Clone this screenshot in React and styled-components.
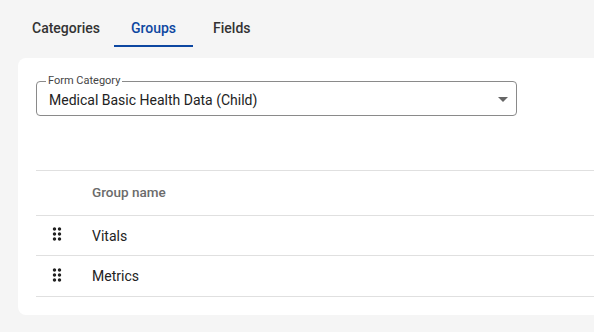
import React from "react";
import styled, { createGlobalStyle } from "styled-components";

const Global = createGlobalStyle`
  html, body { margin: 0; padding: 0; background: #f5f5f5; overflow: hidden; }
  body { font-family: Roboto, "Liberation Sans", Arial, sans-serif; }
`;

const Page = styled.div`
  width: 594px;
  height: 332px;
  display: flex;
  flex-direction: column;
  overflow: hidden;
`;

const TabBar = styled.div`
  display: flex;
  padding: 9px 0 0 16px;
  height: 38px;
`;

const Tab = styled.div`
  position: relative;
  display: flex;
  align-items: center;
  padding: ${(p) => p.$pad || "0 16px"};
  font-size: 14px;
  font-weight: 500;
  color: ${(p) => (p.$active ? "#0d47a1" : "#333333")};
  &::after {
    content: "";
    position: absolute;
    left: 0;
    right: 0;
    bottom: 0;
    height: 2px;
    background: ${(p) => (p.$active ? "#0d47a1" : "transparent")};
  }
`;

const Card = styled.div`
  margin: 11px 0 0 18px;
  width: 700px;
  background: #ffffff;
  border-radius: 8px;
  padding: 23px 0 18px 18px;
  box-sizing: border-box;
`;

const SelectBox = styled.div`
  position: relative;
  width: 481px;
  height: 35px;
  box-sizing: border-box;
  border: 1px solid #8a8a8a;
  border-radius: 4px;
  display: flex;
  align-items: center;
  padding: 0 12px;
`;

const SelectLabel = styled.span`
  position: absolute;
  left: 9px;
  top: -8px;
  padding: 0 2px;
  background: #ffffff;
  font-size: 11px;
  line-height: 14px;
  color: #444444;
`;

const SelectValue = styled.span`
  flex: 1;
  font-size: 14px;
  color: #222222;
  margin-top: 2px;
`;

const Arrow = styled.svg`
  width: 24px;
  height: 24px;
  margin-right: -11px;
  margin-top: 1px;
  fill: #666666;
`;

const Table = styled.div`
  margin-top: 54px;
  border-top: 1px solid #e0e0e0;
`;

const HeaderRow = styled.div`
  display: flex;
  align-items: center;
  box-sizing: border-box;
  height: 45px;
  border-bottom: 1px solid #e0e0e0;
  padding-left: 56px;
  padding-bottom: 2px;
  font-size: 13.5px;
  font-weight: 500;
  color: #6b6b6b;
`;

const Row = styled.div`
  display: flex;
  align-items: center;
  box-sizing: border-box;
  height: ${(p) => (p.$last ? "41px" : "40px")};
  border-bottom: 1px solid #e0e0e0;
  padding-left: 11px;
  font-size: 14px;
  color: #222222;
`;

const Handle = styled.svg`
  width: 20px;
  height: 20px;
  fill: #222222;
  margin-right: 25px;
  margin-top: -3px;
`;

const DragIcon = () => (
  <Handle viewBox="0 0 24 24">
    <path d="M11 18c0 1.1-.9 2-2 2s-2-.9-2-2 .9-2 2-2 2 .9 2 2zm-2-8c-1.1 0-2 .9-2 2s.9 2 2 2 2-.9 2-2-.9-2-2-2zm0-6c-1.1 0-2 .9-2 2s.9 2 2 2 2-.9 2-2-.9-2-2-2zm6 4c1.1 0 2-.9 2-2s-.9-2-2-2-2 .9-2 2 .9 2 2 2zm0 2c-1.1 0-2 .9-2 2s.9 2 2 2 2-.9 2-2-.9-2-2-2zm0 6c-1.1 0-2 .9-2 2s.9 2 2 2 2-.9 2-2-.9-2-2-2z" />
  </Handle>
);

const groups = ["Vitals", "Metrics"];

export default function App() {
  return (
    <Page>
      <Global />
      <TabBar>
        <Tab $pad="0 14px 0 16px">Categories</Tab>
        <Tab $active $pad="0 17px">Groups</Tab>
        <Tab $pad="0 16px 0 20px">Fields</Tab>
      </TabBar>
      <Card>
        <SelectBox>
          <SelectLabel>Form Category</SelectLabel>
          <SelectValue>Medical Basic Health Data (Child)</SelectValue>
          <Arrow viewBox="0 0 24 24">
            <path d="M7 10l5 5 5-5z" />
          </Arrow>
        </SelectBox>
        <Table>
          <HeaderRow>Group name</HeaderRow>
          {groups.map((g, i) => (
            <Row key={g} $last={i === groups.length - 1}>
              <DragIcon />
              {g}
            </Row>
          ))}
        </Table>
      </Card>
    </Page>
  );
}
